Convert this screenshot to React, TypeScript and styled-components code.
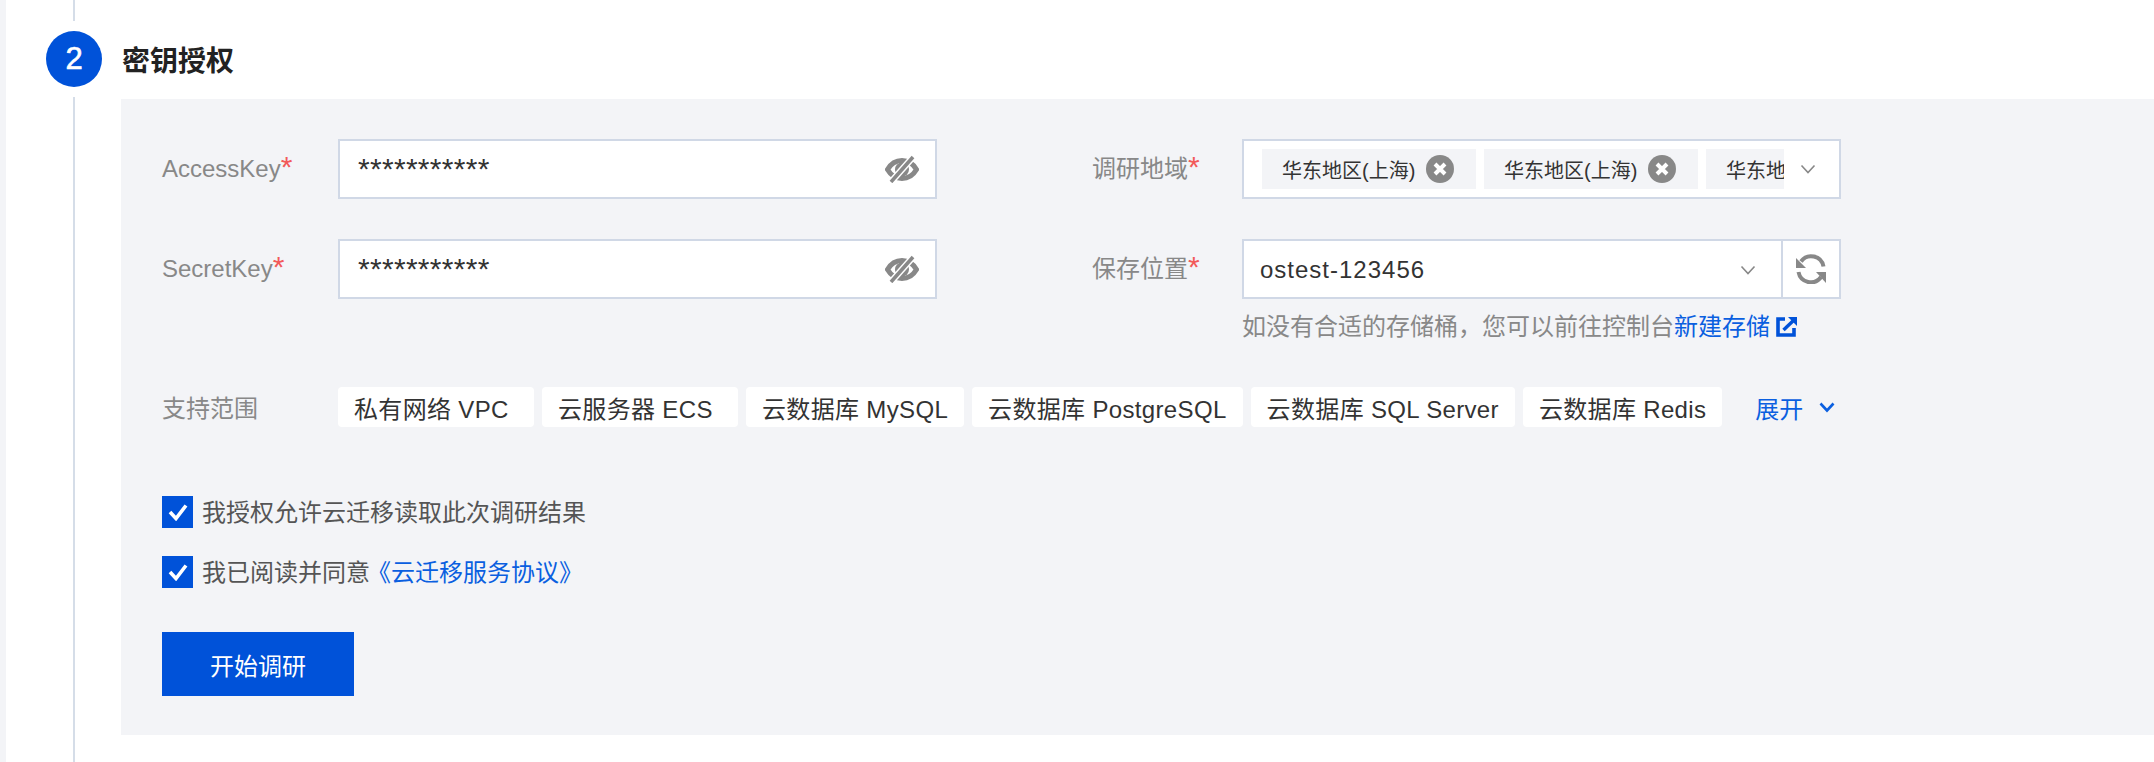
import React from "react";
import styled, { createGlobalStyle } from "styled-components";

const Global = createGlobalStyle`
  html, body { margin: 0; padding: 0; background: #fff; overflow: hidden; }
  body { font-family: "Liberation Sans", "Noto Sans CJK SC", sans-serif; color: #333; }
`;

const Page = styled.div`
  display: flex;
  width: 2154px;
  height: 762px;
  box-sizing: border-box;
  border-left: 6px solid #f3f4f7;
`;
const Rail = styled.div`
  display: flex;
  flex-direction: column;
  align-items: center;
  width: 56px;
  margin-left: 40px;
  flex-shrink: 0;
`;
const RailLine = styled.div<{ $fill?: boolean }>`
  width: 2px;
  background: #d5dde8;
  height: ${(p) => (p.$fill ? "auto" : "21px")};
  flex: ${(p) => (p.$fill ? "1" : "none")};
`;
const StepBadge = styled.div`
  width: 56px;
  height: 56px;
  margin: 10px 0;
  border-radius: 50%;
  background: #0052d9;
  color: #fff;
  font-size: 31px;
  line-height: 56px;
  text-align: center;
  flex-shrink: 0;
  -webkit-text-stroke: 0.6px #fff;
`;
const Main = styled.div`
  flex: 1;
  min-width: 0;
  margin-left: 19px;
`;
const Title = styled.h2`
  margin: 0;
  height: 99px;
  box-sizing: border-box;
  padding: 0 0 0 1px;
  font-size: 28px;
  line-height: 124px;
  font-weight: 600;
  color: #222;
`;
const Panel = styled.div`
  height: 636px;
  box-sizing: border-box;
  padding: 40px 0 40px 41px;
  background: #f3f4f7;
`;
const FormGrid = styled.div`
  display: grid;
  grid-template-columns: 775px 749px;
  row-gap: 40px;
  column-gap: 155px;
  width: 1679px;
`;
const Field = styled.div`
  display: flex;
  align-items: flex-start;
`;
const Label = styled.label<{ $width: number }>`
  width: ${(p) => p.$width}px;
  flex-shrink: 0;
  font-size: 24px;
  line-height: 60px;
  color: #888;
`;
const Star = styled.span`
  font-size: 30px;
  line-height: 0;
  color: #f25a5a;
`;
const ControlColumn = styled.div`
  width: 599px;
`;
const InputBox = styled.div`
  display: flex;
  align-items: center;
  justify-content: space-between;
  box-sizing: border-box;
  width: 599px;
  height: 60px;
  padding: 0 16px 0 18px;
  background: #fff;
  border: 2px solid #d0d8e6;
`;
const Masked = styled.span`
  font-size: 30px;
  line-height: 56px;
  letter-spacing: 0.3px;
  color: #333;
`;
const TagSelect = styled.div`
  display: flex;
  align-items: center;
  box-sizing: border-box;
  width: 599px;
  height: 60px;
  padding-left: 18px;
  background: #fff;
  border: 2px solid #d0d8e6;
`;
const TagTrack = styled.div`
  display: flex;
  gap: 8px;
  width: 522px;
  overflow: hidden;
  flex-shrink: 0;
`;
const RegionTag = styled.span`
  display: flex;
  align-items: center;
  gap: 11px;
  box-sizing: border-box;
  width: 214px;
  height: 40px;
  padding-left: 20px;
  flex-shrink: 0;
  background: #f3f4f7;
  font-size: 20px;
  white-space: nowrap;
  color: #333;
`;
const ChevronSlot = styled.span`
  display: flex;
  justify-content: center;
  flex: 1;
  padding-right: 8px;
`;
const SelectGroup = styled.div`
  display: flex;
  box-sizing: border-box;
  width: 599px;
  height: 60px;
  background: #fff;
  border: 2px solid #d0d8e6;
`;
const SelectValue = styled.div`
  display: flex;
  align-items: center;
  justify-content: space-between;
  flex: 1;
  padding: 2px 25px 0 16px;
  font-size: 24px;
  letter-spacing: 1px;
  color: #333;
`;
const RefreshButton = styled.div`
  display: flex;
  align-items: center;
  justify-content: center;
  width: 56px;
  flex-shrink: 0;
  border-left: 2px solid #d0d8e6;
`;
const Hint = styled.div`
  display: flex;
  align-items: center;
  margin-top: 12px;
  font-size: 24px;
  line-height: 32px;
  color: #888;
  white-space: nowrap;
`;
const Link = styled.a`
  color: #0a5fe0;
  text-decoration: none;
`;
const AgreementLink = styled(Link)`
  margin-left: -3px;
`;
const ExternalIcon = styled.svg`
  margin-left: 6px;
  flex-shrink: 0;
`;
const ScopeRow = styled.div`
  display: flex;
  align-items: center;
  margin-top: 44px;
`;
const ScopeLabel = styled.span`
  width: 176px;
  flex-shrink: 0;
  font-size: 24px;
  line-height: 44px;
  color: #888;
`;
const ScopeTag = styled.span`
  display: inline-flex;
  align-items: center;
  box-sizing: border-box;
  min-width: 196px;
  height: 40px;
  margin-right: 8px;
  padding: 0 16px;
  flex-shrink: 0;
  border-radius: 4px;
  background: #fff;
  font-size: 24px;
  letter-spacing: 0.34px;
  white-space: nowrap;
  color: #333;
  transform: translateY(-2px);
`;
const Expand = styled.span`
  display: flex;
  align-items: center;
  gap: 16px;
  margin-left: 25px;
  font-size: 24px;
  color: #0a5fe0;
  transform: translateY(-2px);
`;
const Checks = styled.div`
  display: flex;
  flex-direction: column;
  gap: 28px;
  margin-top: 65px;
`;
const CheckRow = styled.div`
  display: flex;
  align-items: center;
  gap: 9px;
  height: 32px;
  font-size: 24px;
  color: #555;
`;
const CheckText = styled.span`
  position: relative;
  top: -2px;
`;
const CheckBox = styled.span`
  display: flex;
  align-items: center;
  justify-content: center;
  width: 31px;
  height: 32px;
  background: #0052d9;
`;
const PrimaryButton = styled.button`
  display: block;
  width: 192px;
  height: 64px;
  margin-top: 44px;
  padding: 0;
  border: 0;
  background: #0052d9;
  color: #fff;
  font: inherit;
  font-size: 24px;
`;

const EyeOff = () => (
  <svg width="34" height="28" viewBox="0 0 34 28" aria-hidden="true">
    <path d="M2.5 14.5C6 8.5 11 5.5 17 5.5s11 3 14.5 9c-3.5 6-8.5 9-14.5 9s-11-3-14.5-9z" fill="none" stroke="#888" strokeWidth="5" />
    <circle cx="17" cy="14.5" r="7" fill="#888" />
    <path d="M6 27 28 2" stroke="#fff" strokeWidth="6.5" />
    <path d="M6 27 28 2" stroke="#888" strokeWidth="3.6" />
  </svg>
);
const CloseDot = () => (
  <svg width="28" height="28" viewBox="0 0 28 28" aria-hidden="true">
    <circle cx="14" cy="14" r="14" fill="#888" />
    <path d="M9 9l10 10M19 9 9 19" stroke="#fff" strokeWidth="4" />
  </svg>
);
const Chevron = ({ color = "#888", weight = 1.6 }: { color?: string; weight?: number }) => (
  <svg width="16" height="12" viewBox="0 0 16 12" aria-hidden="true">
    <path d="M1.5 2.5 8 9.5l6.5-7" fill="none" stroke={color} strokeWidth={weight} />
  </svg>
);
const Refresh = () => (
  <svg width="30" height="30" viewBox="0 0 30 30" aria-hidden="true">
    <path d="M5 7.5A12.5 12.5 0 0 1 27.5 12.5" fill="none" stroke="#888" strokeWidth="4" />
    <path d="M2.5 18A12.5 12.5 0 0 0 25 23" fill="none" stroke="#888" strokeWidth="4" />
    <path d="M0 4v10h10z" fill="#888" />
    <path d="M30 29V18H20z" fill="#888" />
  </svg>
);
const External = () => (
  <ExternalIcon width="21" height="20" viewBox="0 0 21 20" aria-hidden="true">
    <path d="M9 2H2v16h16v-7" fill="none" stroke="#0052d9" strokeWidth="3.6" />
    <path d="M7.5 13 18 3" stroke="#0052d9" strokeWidth="3.4" />
    <path d="M12 0h9v9z" fill="#0052d9" />
  </ExternalIcon>
);
const Tick = () => (
  <svg width="20" height="18" viewBox="0 0 20 18" aria-hidden="true">
    <path d="M2 9l6 6.5L18 2.5" fill="none" stroke="#fff" strokeWidth="3.6" />
  </svg>
);

const scopes = ["私有网络 VPC", "云服务器 ECS", "云数据库 MySQL", "云数据库 PostgreSQL", "云数据库 SQL Server", "云数据库 Redis"];

export default function App() {
  return (
    <>
      <Global />
      <Page>
        <Rail>
          <RailLine />
          <StepBadge>2</StepBadge>
          <RailLine $fill />
        </Rail>
        <Main>
          <Title>密钥授权</Title>
          <Panel>
            <FormGrid>
              <Field>
                <Label $width={176}>AccessKey<Star>*</Star></Label>
                <InputBox><Masked>***********</Masked><EyeOff /></InputBox>
              </Field>
              <Field>
                <Label $width={150}>调研地域<Star>*</Star></Label>
                <TagSelect>
                  <TagTrack>
                    <RegionTag>华东地区(上海)<CloseDot /></RegionTag>
                    <RegionTag>华东地区(上海)<CloseDot /></RegionTag>
                    <RegionTag>华东地区(上海)<CloseDot /></RegionTag>
                  </TagTrack>
                  <ChevronSlot><Chevron /></ChevronSlot>
                </TagSelect>
              </Field>
              <Field>
                <Label $width={176}>SecretKey<Star>*</Star></Label>
                <InputBox><Masked>***********</Masked><EyeOff /></InputBox>
              </Field>
              <Field>
                <Label $width={150}>保存位置<Star>*</Star></Label>
                <ControlColumn>
                  <SelectGroup>
                    <SelectValue>ostest-123456<Chevron /></SelectValue>
                    <RefreshButton><Refresh /></RefreshButton>
                  </SelectGroup>
                  <Hint>如没有合适的存储桶，您可以前往控制台<Link>新建存储</Link><External /></Hint>
                </ControlColumn>
              </Field>
            </FormGrid>
            <ScopeRow>
              <ScopeLabel>支持范围</ScopeLabel>
              {scopes.map((s) => <ScopeTag key={s}>{s}</ScopeTag>)}
              <Expand>展开<Chevron color="#0a5fe0" weight={2.6} /></Expand>
            </ScopeRow>
            <Checks>
              <CheckRow><CheckBox><Tick /></CheckBox><CheckText>我授权允许云迁移读取此次调研结果</CheckText></CheckRow>
              <CheckRow><CheckBox><Tick /></CheckBox><CheckText>我已阅读并同意<AgreementLink>《云迁移服务协议》</AgreementLink></CheckText></CheckRow>
            </Checks>
            <PrimaryButton>开始调研</PrimaryButton>
          </Panel>
        </Main>
      </Page>
    </>
  );
}
